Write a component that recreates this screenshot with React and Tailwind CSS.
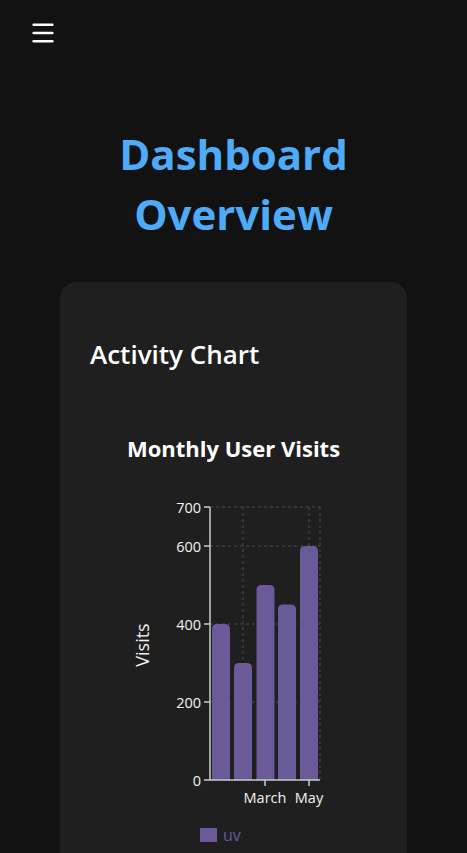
import { Menu } from "lucide-react"

const bars = [
  { x: 152, v: 400 },
  { x: 174, v: 300 },
  { x: 196.5, v: 500 },
  { x: 218, v: 450 },
  { x: 240, v: 600 },
]

// 0 sits at y=290, 700 at y=17
const yOf = (v) => 290 - v * 0.39

const BarTop = ({ x, v }) => {
  const top = yOf(v)
  const w = 18
  const r = 5
  return (
    <path
      d={`M${x},290 V${top + r} Q${x},${top} ${x + r},${top} H${x + w - r} Q${x + w},${top} ${x + w},${top + r} V290 Z`}
      fill="#6a5a99"
    />
  )
}

const ActivityChart = () => {
  const yTicks = [700, 600, 400, 200, 0]
  return (
    <svg width="348" height="366" className="block" style={{ fontFamily: "'Open Sans', 'Noto Sans', sans-serif" }}>
      {/* grid */}
      {[700, 600, 400, 200].map((t) => (
        <line key={t} x1="150" x2="260" y1={yOf(t)} y2={yOf(t)} stroke="#4a4a4a" strokeDasharray="3 3" />
      ))}
      {[183, 249, 260].map((x) => (
        <line key={x} x1={x} x2={x} y1="17" y2="290" stroke="#4a4a4a" strokeDasharray="3 3" />
      ))}

      {bars.map((b) => (
        <BarTop key={b.x} {...b} />
      ))}

      {/* axes */}
      <line x1="150" x2="150" y1="17" y2="290" stroke="#cccccc" strokeWidth="1.5" />
      <line x1="150" x2="260" y1="290" y2="290" stroke="#cccccc" strokeWidth="1.5" />
      {yTicks.map((t) => (
        <g key={t}>
          <line x1="144" x2="150" y1={yOf(t)} y2={yOf(t)} stroke="#cccccc" strokeWidth="1.5" />
          <text x="141" y={yOf(t)} textAnchor="end" dominantBaseline="central" fontSize="14.5" fill="#f2f2f2">
            {t}
          </text>
        </g>
      ))}
      {[
        { x: 205, label: "March" },
        { x: 249, label: "May" },
      ].map((t) => (
        <g key={t.label}>
          <line x1={t.x} x2={t.x} y1="290" y2="296" stroke="#cccccc" strokeWidth="1.5" />
          <text x={t.x} y="307" textAnchor="middle" dominantBaseline="central" fontSize="14.5" fill="#f2f2f2">
            {t.label}
          </text>
        </g>
      ))}
      <text
        x="82"
        y="155"
        textAnchor="middle"
        dominantBaseline="central"
        fontSize="18"
        fill="#f2f2f2"
        transform="rotate(-90 82 155)"
      >
        Visits
      </text>

      {/* legend */}
      <rect x="140" y="338" width="17" height="14" fill="#6a5a99" />
      <text x="163" y="345" dominantBaseline="central" fontSize="16" fill="#6a5a99">
        uv
      </text>
    </svg>
  )
}

export default function App() {
  return (
    <div className="min-h-[853px] bg-[#121212] text-white font-['Open_Sans','Noto_Sans',sans-serif]">
      <div className="px-[29px] pt-[19px]">
        <Menu className="h-[28px] w-[28px] text-white" strokeWidth={2.2} />
      </div>

      <h1 className="mt-[77px] text-center text-[42px] font-bold leading-[60px] text-[#4dabf7]">
        Dashboard
        <br />
        Overview
      </h1>

      <div className="mx-[60px] mt-[38px] rounded-2xl bg-[#1f1f1f] px-[30px] pt-[54px] pb-6">
        <h2 className="text-[26px] font-semibold leading-[36px] text-white">Activity Chart</h2>
        <h3 className="mt-[61px] text-center text-[22px] font-bold leading-[30px] text-white">Monthly User Visits</h3>
        <div className="-mx-[30px] mt-[27px]">
          <ActivityChart />
        </div>
      </div>
    </div>
  )
}
